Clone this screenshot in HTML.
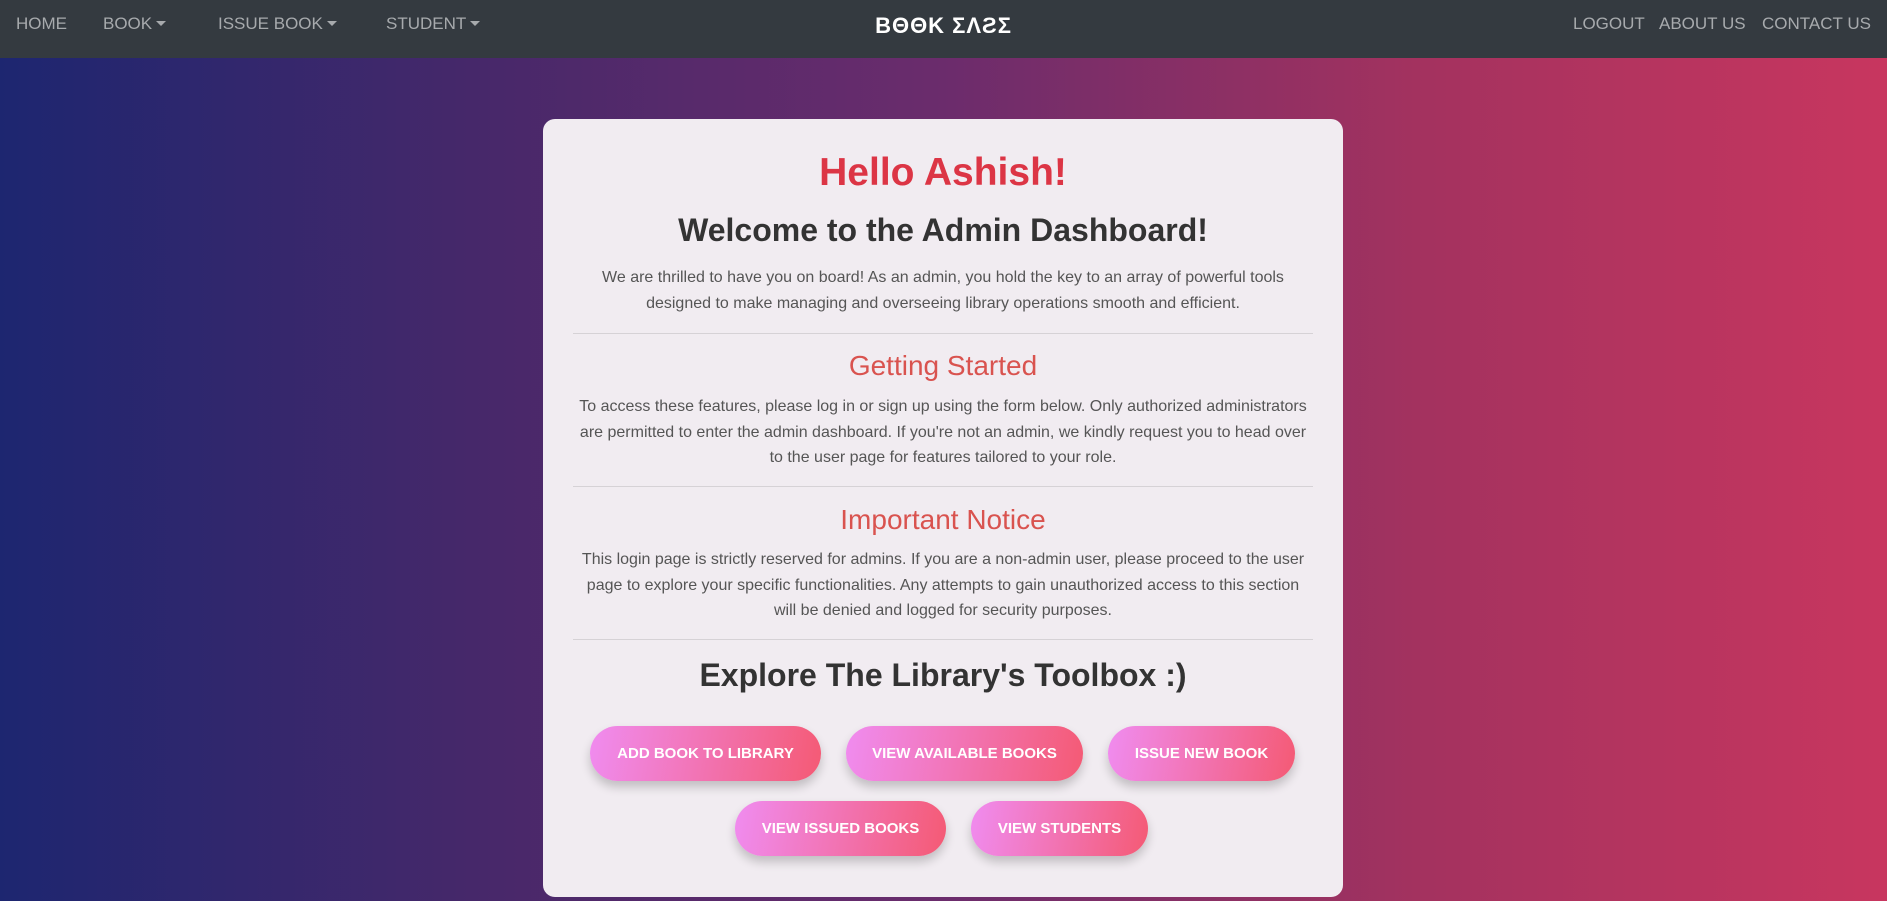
<!DOCTYPE html>
<html><head><meta charset="utf-8"><style>
*{margin:0;padding:0;box-sizing:border-box}
html,body{width:1887px;height:901px;overflow:hidden}
body{font-family:"Liberation Sans",sans-serif;background:linear-gradient(90deg,#1d2670 0%,#46286a 25%,#6b2c6c 50%,#a3325f 75%,#c8365f 100%);position:relative}
.nav{position:absolute;top:0;left:0;width:1887px;height:58px;background:#343a40;color:#a7aaad;font-size:17px}
.nav span{position:absolute;top:14px;white-space:nowrap}
.caret{display:inline-block;width:0;height:0;border-left:5px solid transparent;border-right:5px solid transparent;border-top:5px solid #a7aaad;vertical-align:middle;margin-left:4px;margin-top:-3px}
.brand{color:#fff;font-weight:bold;font-size:22px;left:0;width:1887px;text-align:center;top:13px!important;letter-spacing:1px}
.card{position:absolute;left:543px;top:119px;width:800px;height:778px;background:#f1ecf1;border-radius:12px;text-align:center;padding:0 30px}
h1{position:absolute;left:0;width:800px;font-size:39px;color:#dc3545;top:32px}
h2{position:absolute;left:0;width:800px;font-size:32px;color:#333;top:93px}
h3{position:absolute;left:0;width:800px;font-size:28px;color:#d9534f;font-weight:normal}
p{position:absolute;left:0;width:800px;font-size:16px;line-height:25.5px;color:#555;white-space:nowrap}
hr{position:absolute;left:30px;width:740px;border:0;border-top:1px solid #d6d2d6}
.btn{position:absolute;height:55px;border-radius:28px;background:linear-gradient(100deg,#f08cf0,#f45a74);color:#fff;font-weight:bold;font-size:15px;line-height:55px;text-align:center;box-shadow:0 6px 10px rgba(0,0,0,.2);white-space:nowrap}
</style></head><body>
<div class="nav">
<span style="left:16px">HOME</span>
<span style="left:103px">BOOK<i class="caret"></i></span>
<span style="left:218px">ISSUE BOOK<i class="caret"></i></span>
<span style="left:386px">STUDENT<i class="caret"></i></span>
<span class="brand">BΘΘK ΣΛƧΣ</span>
<span style="left:1573px">LOGOUT</span>
<span style="left:1659px">ABOUT US</span>
<span style="left:1762px">CONTACT US</span>
</div>
<div class="card">
<h1>Hello Ashish!</h1>
<h2>Welcome to the Admin Dashboard!</h2>
<p style="top:146px">We are thrilled to have you on board! As an admin, you hold the key to an array of powerful tools<br>designed to make managing and overseeing library operations smooth and efficient.</p>
<hr style="top:214px">
<h3 style="top:231px">Getting Started</h3>
<p style="top:275px">To access these features, please log in or sign up using the form below. Only authorized administrators<br>are permitted to enter the admin dashboard. If you're not an admin, we kindly request you to head over<br>to the user page for features tailored to your role.</p>
<hr style="top:367px">
<h3 style="top:385px">Important Notice</h3>
<p style="top:428px">This login page is strictly reserved for admins. If you are a non-admin user, please proceed to the user<br>page to explore your specific functionalities. Any attempts to gain unauthorized access to this section<br>will be denied and logged for security purposes.</p>
<hr style="top:520px">
<h2 style="top:538px">Explore The Library's Toolbox :)</h2>
</div>
<div class="btn" style="left:590px;top:726px;width:231px">ADD BOOK TO LIBRARY</div>
<div class="btn" style="left:846px;top:726px;width:237px">VIEW AVAILABLE BOOKS</div>
<div class="btn" style="left:1108px;top:726px;width:187px">ISSUE NEW BOOK</div>
<div class="btn" style="left:735px;top:801px;width:211px">VIEW ISSUED BOOKS</div>
<div class="btn" style="left:971px;top:801px;width:177px">VIEW STUDENTS</div>
</body></html>
